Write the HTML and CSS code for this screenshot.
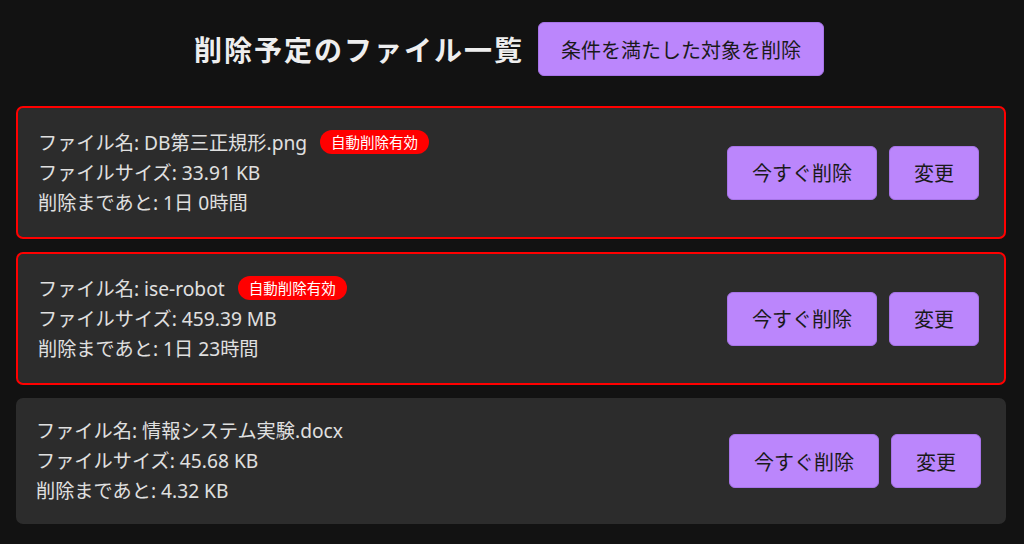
FILE: index.html
```html
<!DOCTYPE html>
<html lang="ja">
<head>
    <meta charset="utf-8">
    <title>削除予定のファイル一覧</title>
    <link rel="stylesheet" href="styles.css">
</head>
<body>
    <div class="header">
        <h1>削除予定のファイル一覧</h1>
        <button class="btn btn-bulk" type="button">条件を満たした対象を削除</button>
    </div>

    <div class="file-list">
        <div class="file-card auto-delete">
            <div class="file-info">
                <div>ファイル名: DB第三正規形.png <span class="badge">自動削除有効</span></div>
                <div>ファイルサイズ: 33.91 KB</div>
                <div>削除まであと: 1日 0時間</div>
            </div>
            <div class="file-actions">
                <button class="btn" type="button">今すぐ削除</button>
                <button class="btn" type="button">変更</button>
            </div>
        </div>

        <div class="file-card auto-delete">
            <div class="file-info">
                <div>ファイル名: ise-robot <span class="badge">自動削除有効</span></div>
                <div>ファイルサイズ: 459.39 MB</div>
                <div>削除まであと: 1日 23時間</div>
            </div>
            <div class="file-actions">
                <button class="btn" type="button">今すぐ削除</button>
                <button class="btn" type="button">変更</button>
            </div>
        </div>

        <div class="file-card">
            <div class="file-info">
                <div>ファイル名: 情報システム実験.docx</div>
                <div>ファイルサイズ: 45.68 KB</div>
                <div>削除まであと: 4.32 KB</div>
            </div>
            <div class="file-actions">
                <button class="btn" type="button">今すぐ削除</button>
                <button class="btn" type="button">変更</button>
            </div>
        </div>
    </div>
</body>
</html>
```

FILE: styles.css
```css
body {
    margin: 0;
    background-color: #121212;
    color: #e0e0e0;
    font-family: "Noto Sans", "Noto Sans CJK JP", sans-serif;
}
.header {
    display: flex;
    justify-content: center;
    align-items: center;
    gap: 14px;
    padding: 22px 0 0;
    margin-bottom: 30px;
}
h1 {
    margin: 0 0 0 -6px;
    font-size: 28px;
    letter-spacing: 2px;
    color: #eeeeee;
    font-weight: bold;
    font-family: "Noto Sans CJK JP", sans-serif;
}
.btn {
    background-color: #bb86fc;
    color: #1a1a1a;
    border: 1px solid #a774e8;
    border-radius: 6px;
    font-size: 20px;
    font-family: "Noto Sans CJK JP", sans-serif;
    height: 54px;
    padding: 0 24px;
    cursor: pointer;
}
.btn-bulk {
    padding: 0 22px;
}
.file-list {
    display: flex;
    flex-direction: column;
    gap: 13px;
    padding: 0 18px 0 16px;
}
.file-card {
    display: flex;
    justify-content: space-between;
    align-items: center;
    background-color: #2c2c2c;
    border-radius: 7px;
    padding: 18px 25px 18px 20px;
    font-size: 19.2px;
    line-height: 30px;
}
.auto-delete {
    border: 2px solid #ff0000;
    padding: 19.5px 25px 19.5px 20px;
}
.badge {
    display: inline-block;
    background-color: #ff0000;
    color: #ffffff;
    font-size: 14.5px;
    line-height: 24px;
    padding: 0 11px;
    border-radius: 12px;
    margin-left: 8px;
    vertical-align: 2px;
    font-family: "Noto Sans CJK JP", sans-serif;
}
.file-actions {
    display: flex;
    gap: 12px;
}
```
